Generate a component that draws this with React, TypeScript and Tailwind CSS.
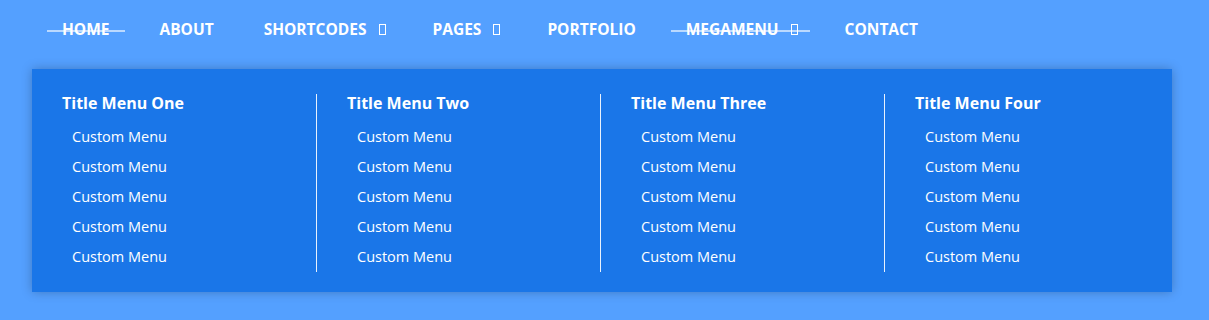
import React from 'react';

const navItems = [
  { label: 'HOME', active: true },
  { label: 'ABOUT' },
  { label: 'SHORTCODES', caret: true },
  { label: 'PAGES', caret: true },
  { label: 'PORTFOLIO' },
  { label: 'MEGAMENU', caret: true, active: true },
  { label: 'CONTACT' },
];

const columns = ['Title Menu One', 'Title Menu Two', 'Title Menu Three', 'Title Menu Four'];

// missing icon-font glyph, drawn as the empty box the browser showed
const Caret = () => (
  <span className="ml-[12px] inline-block h-[11px] w-[7px] border border-white" />
);

const App = () => {
  return (
    <div
      className="min-h-screen bg-[#54a0ff] pt-px text-white"
      style={{ fontFamily: '"Open Sans", "Noto Sans", sans-serif' }}
    >
      {/* Top nav */}
      <nav className="flex h-[57px] items-center pl-[47px]">
        {navItems.map((item, i) => (
          <div
            key={item.label}
            className={`relative flex items-center pl-[15px] text-[15.5px] font-bold ${item.caret ? 'pr-[12px]' : 'pr-[15px]'} ${i > 0 ? 'ml-[20px]' : ''}`}
          >
            <span>{item.label}</span>
            {item.caret && <Caret />}
            {item.active && (
              <span className="absolute left-0 right-0 top-1/2 h-[2px] bg-white/60" />
            )}
          </div>
        ))}
      </nav>

      {/* Mega menu */}
      <div className="ml-[32px] mt-[11px] grid w-[1140px] grid-cols-[285px_284px_284px_1fr] bg-[#1a76e8] pb-[20px] pt-[25px] shadow-[0_0_10px_rgba(0,0,0,0.25)]">
        {columns.map((title, i) => (
          <div
            key={title}
            className={`px-[30px] ${i < 3 ? 'border-r border-white/90' : ''}`}
          >
            <h3 className="text-[16px] font-bold leading-[18px]">{title}</h3>
            <ul className="mt-[10px] pl-[10px]">
              {Array.from({ length: 5 }).map((_, j) => (
                <li key={j} className="text-[14.5px] leading-[30px]">
                  Custom Menu
                </li>
              ))}
            </ul>
          </div>
        ))}
      </div>
    </div>
  );
};

export default App;
